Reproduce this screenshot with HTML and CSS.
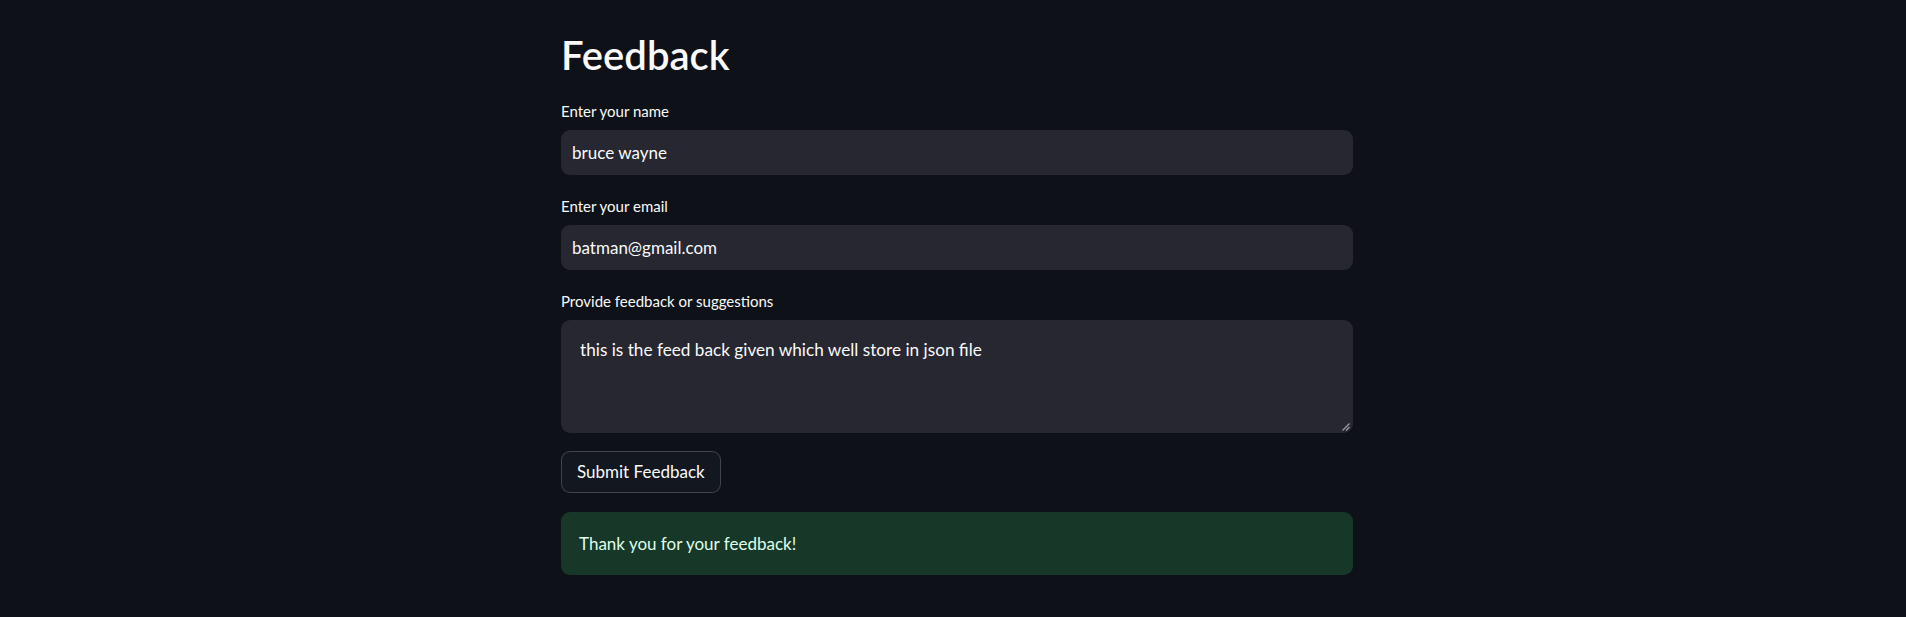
FILE: index.html
```html
<!DOCTYPE html>
<html lang="en">
<head>
<meta charset="utf-8">
<title>Feedback</title>
<link rel="stylesheet" href="styles.css">
</head>
<body>
<div class="app">
  <main class="block">
    <h2 class="title">Feedback</h2>
    <div class="widget">
      <div class="label">Enter your name</div>
      <div class="input">bruce wayne</div>
    </div>
    <div class="widget">
      <div class="label">Enter your email</div>
      <div class="input">batman@gmail.com</div>
    </div>
    <div class="widget">
      <div class="label">Provide feedback or suggestions</div>
      <div class="textarea">
        <span class="textarea-text">this is the feed back given which well store in json file</span>
        <svg class="grip" width="9" height="9" viewBox="0 0 9 9" aria-hidden="true">
          <path d="M8.5 1.5 L1.5 8.5 M8.5 5 L5 8.5" stroke="#a0a0a6" stroke-width="1.2" fill="none"/>
        </svg>
      </div>
    </div>
    <div class="widget">
      <button class="button" type="button">Submit Feedback</button>
    </div>
    <div class="alert">Thank you for your feedback!</div>
  </main>
</div>
</body>
</html>
```

FILE: styles.css
```css
html, body {
  margin: 0;
  padding: 0;
  background: #0e1117;
}

body {
  font-family: "Source Sans Pro", Lato, "Liberation Sans", sans-serif;
  color: #fafafa;
}

.app {
  display: flex;
  justify-content: center;
  padding-left: 8px;
  min-height: 617px;
  box-sizing: border-box;
}

.block {
  width: 792px;
  display: flex;
  flex-direction: column;
  gap: 18px;
  padding-top: 31px;
}

.title {
  margin: 0;
  font-size: 40px;
  font-weight: 600;
  line-height: 48px;
  height: 49px;
}

.widget {
  display: flex;
  flex-direction: column;
  align-items: flex-start;
}

.label {
  font-size: 15px;
  line-height: 24px;
  height: 27px;
  margin-bottom: 5px;
  padding-top: 1px;
  box-sizing: border-box;
}

.input {
  align-self: stretch;
  height: 45px;
  box-sizing: border-box;
  background: #262730;
  border-radius: 9px;
  padding: 0 11px;
  font-size: 17px;
  line-height: 45px;
}

.textarea {
  position: relative;
  align-self: stretch;
  height: 113px;
  box-sizing: border-box;
  background: #262730;
  border-radius: 9px;
  padding: 16px 19px;
  font-size: 17.2px;
  line-height: 28px;
}

.grip {
  position: absolute;
  right: 3px;
  bottom: 2px;
}

.button {
  height: 42px;
  box-sizing: border-box;
  padding: 0 15px;
  background: #131720;
  border: 1px solid rgba(250, 250, 250, 0.2);
  border-radius: 9px;
  color: #fafafa;
  font-family: inherit;
  font-size: 17px;
  line-height: 40px;
}

.alert {
  box-sizing: border-box;
  height: 63px;
  margin-top: 1px;
  padding: 17px 18px;
  background: #173828;
  border-radius: 9px;
  color: #dffde9;
  font-size: 17px;
  line-height: 29px;
}
```
